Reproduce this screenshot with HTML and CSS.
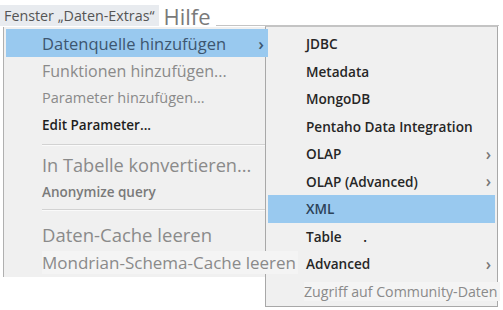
FILE: index.html
```html
<!DOCTYPE html>
<html lang="de">
<head>
    <meta charset="UTF-8">
    <title>Daten-Extras</title>
    <link rel="stylesheet" href="styles.css">
</head>
<body>

<div class="menubar">
    <span class="menubar-label">Fenster „Daten-Extras“</span>
    <span class="menubar-help">Hilfe</span>
    <span class="menubar-line"></span>
</div>

<div class="menus">
    <div class="menu main-menu">
        <div class="item item-active size-165 h-28">
            <span>Datenquelle hinzufügen</span>
            <span class="arrow">›</span>
        </div>
        <div class="item dim size-16 h-27">Funktionen hinzufügen...</div>
        <div class="item dim size-145 h-27">Parameter hinzufügen...</div>
        <div class="item strong size-135 h-28">Edit Parameter...</div>
        <div class="separator"></div>
        <div class="item dim size-18 h-30">In Tabelle konvertieren...</div>
        <div class="item dim-strong size-135 h-23">Anonymize query</div>
        <div class="separator sep-tall"></div>
        <div class="item dim size-185 h-28">Daten-Cache leeren</div>
        <div class="item dim size-17 h-28">
            <span class="overflow-text">Mondrian-Schema-Cache leeren</span>
        </div>
    </div>

    <div class="menu sub-menu">
        <div class="sub-item">JDBC</div>
        <div class="sub-item">Metadata</div>
        <div class="sub-item">MongoDB</div>
        <div class="sub-item">Pentaho Data Integration</div>
        <div class="sub-item"><span>OLAP</span><span class="arrow">›</span></div>
        <div class="sub-item"><span>OLAP (Advanced)</span><span class="arrow">›</span></div>
        <div class="sub-item sub-active">XML</div>
        <div class="sub-item"><span>Table <span class="dot">.</span></span></div>
        <div class="sub-item"><span>Advanced</span><span class="arrow">›</span></div>
        <div class="sub-item sub-dim"><span class="community">Zugriff auf Community-Daten</span></div>
    </div>
</div>

</body>
</html>
```

FILE: styles.css
```css
* {
    margin: 0;
    padding: 0;
    box-sizing: border-box;
}

body {
    font-family: "Open Sans", "DejaVu Sans", sans-serif;
    background-color: #ffffff;
    width: 503px;
    height: 310px;
    overflow: hidden;
}

/* top bar */
.menubar {
    display: flex;
    align-items: flex-end;
    height: 26px;
    padding-top: 3px;
}

.menubar-label {
    background-color: #e8ebef;
    color: #555;
    font-size: 14.3px;
    line-height: 21px;
    padding: 0 5px 0 4px;
    white-space: nowrap;
}

.menubar-help {
    color: #7a7a7a;
    font-size: 22px;
    line-height: 30px;
    margin: 0 0 -5px 4px;
}

.menubar-line {
    width: 283px;
    margin-left: 5px;
    border-bottom: 1px solid #c4c4c4;
}

/* menus */
.menus {
    display: flex;
    align-items: flex-start;
    padding-left: 3px;
}

.menu {
    background-color: #f0f0f0;
}

.main-menu {
    position: relative;
    z-index: 2;
    width: 262px;
    margin-top: 1px;
    border-left: 1px solid #b0b0b0;
    padding: 2px 0 1px 2px;
}

.sub-menu {
    width: 233px;
    height: 281px;
    border: 1px solid #a8a8a8;
    border-top-color: #c4c4c4;
    padding: 3px 2px 1px 2px;
    position: relative;
    z-index: 1;
}

.item {
    display: flex;
    align-items: center;
    justify-content: space-between;
    padding-left: 36px;
    padding-right: 4px;
    white-space: nowrap;
}

.item-active {
    background-color: #99c9ef;
    color: #3d5670;
    margin-right: -3px;
    padding-right: 4px;
}

.dim {
    color: #8a8a8a;
}

.dim-strong {
    color: #7a7a7a;
    font-weight: 600;
}

.strong {
    color: #1e1e1e;
    font-weight: 600;
}

.size-135 { font-size: 13.5px; }
.size-145 { font-size: 14.5px; }
.size-16 { font-size: 16px; }
.size-165 { font-size: 16.5px; }
.size-17 { font-size: 17px; }
.size-18 { font-size: 18.2px; }
.size-185 { font-size: 18.5px; }

.h-23 { height: 23px; }
.h-27 { height: 27px; }
.h-28 { height: 28px; }
.h-30 { height: 30px; }

.separator {
    height: 1px;
    margin: 5px 0 4px 36px;
    background-color: #d2d2d2;
    border-bottom: 1px solid #fafafa;
    box-sizing: content-box;
}

.sep-tall {
    margin: 6px 0 9px 36px;
}

.arrow {
    font-size: 17px;
    font-weight: 600;
    color: #666;
}

.item-active .arrow {
    color: #3d5670;
}

.overflow-text {
    background-color: #f4f4f4;
    padding-right: 2px;
}

.sub-item {
    display: flex;
    align-items: center;
    justify-content: space-between;
    height: 27.5px;
    padding-left: 38px;
    padding-right: 4px;
    font-size: 13.6px;
    font-weight: 600;
    color: #262626;
    white-space: nowrap;
}

.sub-active {
    background-color: #99c9ef;
    color: #2c4258;
}

.sub-item .arrow {
    font-size: 16px;
    color: #777;
}

.dot {
    margin-left: 18px;
}

.sub-dim {
    font-size: 14.2px;
    font-weight: 400;
    color: #8a8a8a;
    padding-left: 36px;
}

.community {
    background-color: #f4f4f4;
    padding-right: 2px;
}
```
